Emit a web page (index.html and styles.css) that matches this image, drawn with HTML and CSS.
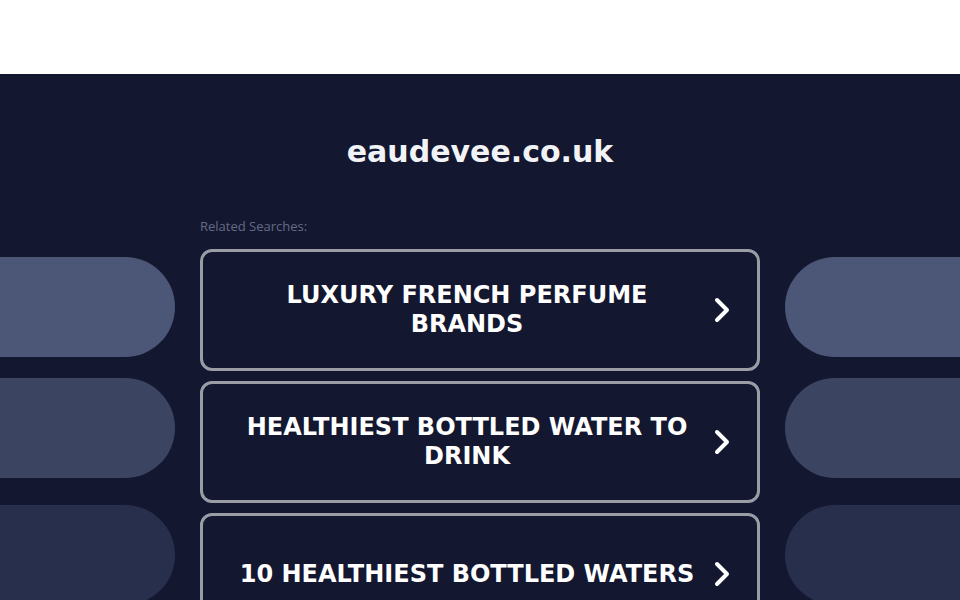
FILE: index.html
```html
<!DOCTYPE html>
<html lang="en">

<head>
  <meta charset="UTF-8" />
  <meta name="viewport" content="width=device-width, initial-scale=1.0" />
  <title>eaudevee.co.uk</title>
  <link rel="stylesheet" href="styles.css">
</head>

<body>
  <!-- top white strip -->
  <div class="topbar"></div>

  <div class="main">
    <h1 class="domain">eaudevee.co.uk</h1>

    <div class="row">
      <!-- decorative pills left -->
      <div class="side side-left">
        <div class="pill p1"></div>
        <div class="pill p2"></div>
        <div class="pill p3"></div>
      </div>

      <div class="searches">
        <p class="label">Related Searches:</p>
        <ul class="list">
          <li>
            <a href="#" class="card">
              <span class="text">LUXURY FRENCH PERFUME BRANDS</span>
              <svg class="arrow" viewBox="0 0 20 28" width="20" height="28"><path d="M5 4 L15 14 L5 24" fill="none" stroke="#fff" stroke-width="4" stroke-linecap="round" stroke-linejoin="round"/></svg>
            </a>
          </li>
          <li>
            <a href="#" class="card">
              <span class="text">HEALTHIEST BOTTLED WATER TO DRINK</span>
              <svg class="arrow" viewBox="0 0 20 28" width="20" height="28"><path d="M5 4 L15 14 L5 24" fill="none" stroke="#fff" stroke-width="4" stroke-linecap="round" stroke-linejoin="round"/></svg>
            </a>
          </li>
          <li>
            <a href="#" class="card">
              <span class="text">10 HEALTHIEST BOTTLED WATERS</span>
              <svg class="arrow" viewBox="0 0 20 28" width="20" height="28"><path d="M5 4 L15 14 L5 24" fill="none" stroke="#fff" stroke-width="4" stroke-linecap="round" stroke-linejoin="round"/></svg>
            </a>
          </li>
        </ul>
      </div>

      <!-- decorative pills right -->
      <div class="side side-right">
        <div class="pill p1"></div>
        <div class="pill p2"></div>
        <div class="pill p3"></div>
      </div>
    </div>
  </div>
</body>

</html>
```

FILE: styles.css
```css
* {
  margin: 0;
  padding: 0;
  box-sizing: border-box;
}

ul {
  list-style: none;
}

html,
body {
  height: 100%;
  overflow: hidden;
}

body {
  background: #131830;
  font-family: "DejaVu Sans", sans-serif;
}

.topbar {
  height: 74px;
  background: #fff;
}

.main {
  padding-top: 58px;
}

.domain {
  text-align: center;
  color: #f2f3f7;
  font: bold 30px "DejaVu Sans", sans-serif;
  line-height: 40px;
}

.row {
  display: flex;
  gap: 25px;
  margin-top: 45px;
}

.side {
  width: 175px;
  padding-top: 40px;
  display: flex;
  flex-direction: column;
}

.pill {
  height: 100px;
  background: #4c5777;
}

.side-left .pill {
  border-radius: 0 50px 50px 0;
}

.side-right .pill {
  border-radius: 50px 0 0 50px;
}

.pill.p2 {
  margin-top: 21px;
  background: #3b4562;
}

.pill.p3 {
  margin-top: 27px;
  background: #272f4d;
}

.searches {
  width: 560px;
}

.label {
  font: 13px "Open Sans", sans-serif;
  color: #666b84;
  line-height: 18px;
  margin-bottom: 14px;
}

.list li {
  margin-bottom: 10px;
}

.card {
  display: flex;
  align-items: center;
  min-height: 122px;
  padding: 0 25px 0 31px;
  border: 3px solid #9a9ca6;
  border-radius: 12px;
  text-decoration: none;
}

.card .text {
  flex: 1;
  text-align: center;
  color: #fff;
  font: bold 24px "DejaVu Sans", sans-serif;
  line-height: 29px;
}

.card .arrow {
  margin-left: 12px;
  flex-shrink: 0;
}
```
